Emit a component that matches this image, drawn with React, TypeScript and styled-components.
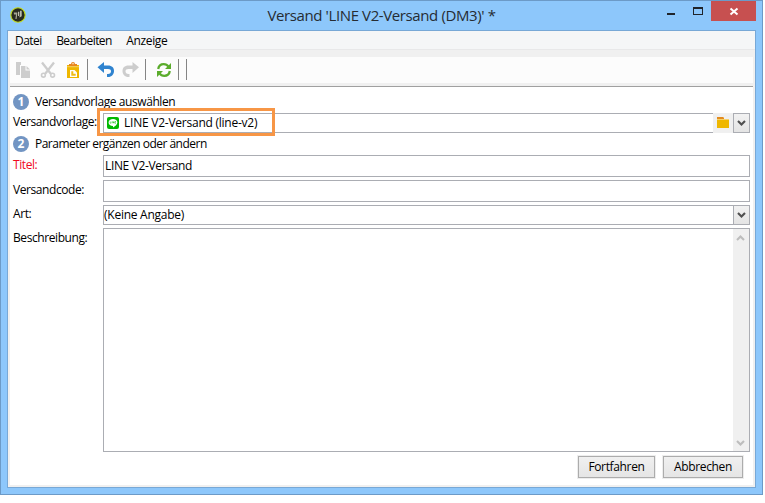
import React from "react";
import styled, { createGlobalStyle } from "styled-components";

const Global = createGlobalStyle`
  * { box-sizing: border-box; }
  body { margin: 0; background: #fff; font-family: "Open Sans", "Noto Sans", sans-serif; font-size: 12px; color: #000; }
`;

const Window = styled.div`
  width: 763px;
  height: 495px;
  display: flex;
  flex-direction: column;
  padding: 0 6px 6px;
  background: #8dc7fb;
  border: 1px solid #6c9ac7;
`;
const TitleBar = styled.header`
  height: 29px;
  flex: none;
  display: flex;
`;
const AppIcon = styled.svg`
  width: 16px;
  height: 16px;
  margin: 6px 0 0 3px;
`;
const Title = styled.h1`
  flex: 1;
  margin: 0;
  padding: 2px 0 0 107px;
  text-align: center;
  font-size: 15px;
  line-height: 24px;
  font-weight: 400;
  letter-spacing: -0.39px;
  color: #262c33;
  white-space: nowrap;
`;
const Controls = styled.div`
  display: flex;
  width: 126px;
`;
const CaptionButton = styled.button<{ $width: number; $close?: boolean }>`
  width: ${(p) => p.$width}px;
  flex: none;
  height: 20px;
  padding: 0;
  border: 0;
  background: ${(p) => (p.$close ? "#c75050" : "transparent")};
  svg { display: block; }
`;
const Client = styled.main`
  flex: 1;
  min-height: 0;
  display: flex;
  flex-direction: column;
  border: 1px solid #78a8d6;
  background: #f0f0f0;
`;
const MenuBar = styled.nav`
  height: 19px;
  flex: none;
  display: flex;
  gap: 14.5px;
  padding-left: 7px;
  background: #f5f6f7;
  border-bottom: 1px solid #e8e8e9;
`;
const MenuItem = styled.span<{ $spacing: number }>`
  line-height: 20px;
  letter-spacing: ${(p) => p.$spacing}px;
`;
const Toolbar = styled.div`
  height: 26px;
  flex: none;
  margin: 7px 2px 3px;
  background: #fcfcfc;
  svg { display: block; }
`;
const Panel = styled.section`
  flex: 1;
  min-height: 0;
  margin: 0 2px 2px;
  padding-left: 3px;
  background: #fff;
  border-top: 1px solid #a0a0a0;
`;
const Step = styled.div<{ $height: number; $top: number }>`
  height: ${(p) => p.$height}px;
  padding-top: ${(p) => p.$top}px;
  display: flex;
  gap: 6px;
`;
const Badge = styled.span`
  width: 16px;
  height: 16px;
  border-radius: 50%;
  background: #7295c3;
  color: #fff;
  text-align: center;
  font-size: 12px;
  line-height: 16px;
  font-weight: 700;
`;
const Text = styled.span<{ $spacing?: number }>`
  line-height: 16px;
  letter-spacing: ${(p) => p.$spacing ?? -0.42}px;
  white-space: nowrap;
`;
const Label = styled(Text)<{ $top: number; $required?: boolean }>`
  padding-top: ${(p) => p.$top}px;
  color: ${(p) => (p.$required ? "#f00a1e" : "#000")};
`;
const Row = styled.div<{ $gap?: number }>`
  display: grid;
  grid-template-columns: 90px 647px;
  align-items: start;
  margin-bottom: ${(p) => p.$gap ?? 0}px;
`;
const Field = styled.div<{ $height: number; $pad?: number; $gap?: number }>`
  height: ${(p) => p.$height}px;
  position: relative;
  display: flex;
  align-items: center;
  gap: ${(p) => p.$gap ?? 0}px;
  padding-left: ${(p) => p.$pad ?? 1}px;
  background: #fff;
  border: 1px solid #abadb3;
`;
const Highlight = styled.div`
  position: absolute;
  left: -7px;
  top: -6px;
  width: 178px;
  height: 28px;
  border: 3px solid #f79646;
`;
const FieldEnd = styled.div`
  margin-left: auto;
  align-self: stretch;
  display: flex;
`;
const FolderButton = styled.div`
  width: 20px;
  margin: -1px 0;
  padding: 4px 0 0 4px;
  background: #f0f0f0;
  svg { display: block; }
`;
const DropButton = styled.div`
  width: 16px;
  border-left: 1px solid #abadb3;
  background: linear-gradient(#f2f2f2, #e4e4e4);
  display: grid;
  place-items: center;
`;
const ScrollBar = styled.div`
  width: 16px;
  padding: 5px 1px 4px 0;
  background: #f0f0f0;
  display: flex;
  flex-direction: column;
  justify-content: space-between;
  align-items: center;
`;
const Actions = styled.div`
  display: flex;
  justify-content: flex-end;
  gap: 8px;
  padding: 4px 10px 0 0;
`;
const PushButton = styled.button<{ $width: number }>`
  width: ${(p) => p.$width}px;
  height: 22px;
  padding: 0;
  border: 1px solid #acacac;
  outline: 1px solid #ededed;
  background: linear-gradient(#f0f0f0, #e5e5e5);
  font: inherit;
  line-height: 20px;
  color: #000;
  letter-spacing: -0.35px;
`;

const Chevron = ({ color = "#505050", up = false }: { color?: string; up?: boolean }) => (
  <svg width="9" height="8" viewBox="0 0 9 8">
    <path d={up ? "M1 6 4.5 2.4 8 6" : "M1 2 4.5 5.6 8 2"} fill="none" stroke={color} strokeWidth="2.1" />
  </svg>
);

/* All toolbar glyphs share one strip so the separators line up with them. */
const ToolbarIcons = () => (
  <svg width="190" height="26" viewBox="10 57 190 26">
    <g fill="#cdcdcd">
      <path d="M16 62h5v3h-1v10h-4z" />
      <path d="M21 66h4.500v4.500H30V78h-9z" />
      <path d="M26.500 66 30 69.500h-3.500z" />
    </g>
    <g fill="none" stroke="#cdcdcd" strokeWidth="1.6">
      <path d="M42 62.500 51 74M54 62.500 45 74" strokeWidth="2.3" />
      <circle cx="43.400" cy="75.200" r="1.900" />
      <circle cx="52.600" cy="75.200" r="1.900" />
    </g>
    <path d="M67 65h12v13H67z" fill="#efb700" />
    <path d="M69 66v-2h2a2 2 0 0 1 4 0h2v2z" fill="#e8851c" />
    <path d="M72.300 63.200h1.400v1h-1.400z" fill="#fff" />
    <path d="M67 66.200h12v1H67z" fill="#f5cf65" />
    <path d="M70 70h4.500l2.500 2.500V77h-7z" fill="#fff" />
    <path d="M71.300 71.300h2v2.400h2.400v2h-4.400z" fill="#f0bd18" />
    <path d="M97.500 67.300 104 62v3.600h4c4 0 6 2.300 6 5.400 0 3.300-2.300 6-6 6h-1v-3h1c2 0 3-1.200 3-2.800 0-1.500-1-2.200-3-2.200h-4V73z" fill="#2f83cf" />
    <path d="M139 67.300 132.500 62v3.600h-4c-4 0-6 2.300-6 5.400 0 3.300 2.300 6 6 6h1v-3h-1c-2 0-3-1.200-3-2.800 0-1.500 1-2.200 3-2.200h4V73z" fill="#cdcdcd" />
    <g fill="none" stroke="#5bac2c" strokeWidth="2.3">
      <path d="M158.200 69c.5-3 2.500-4.800 5.500-4.800 2.200 0 3.700.8 4.800 2.400" />
      <path d="M169.800 71c-.5 3-2.500 4.800-5.500 4.800-2.200 0-3.700-.8-4.800-2.400" />
    </g>
    <path d="M171 63v6h-6zM157 77v-6h6z" fill="#5bac2c" />
    <path d="M87.500 59v21M145.500 59v21M178.500 59v21M186.500 59v21" stroke="#858585" />
  </svg>
);

export default function App() {
  return (
    <>
      <Global />
      <Window>
        <TitleBar>
          <AppIcon viewBox="0 0 16 16">
            <circle cx="8" cy="8" r="7.2" fill="#292b20" stroke="#c5dc18" strokeWidth="1.1" />
            <path d="M3.800 5.500h3.500v1.300L6.600 12H5.400l.6-4.500H4z" fill="#a8a894" />
            <path d="M8 4.800h1.300V9H8zM10 3.800h1.700v5.400L9.500 10.500V9.200l.5-.4z" fill="#bdbdae" />
          </AppIcon>
          <Title>Versand 'LINE V2-Versand (DM3)' *</Title>
          <Controls>
            <CaptionButton $width={50} aria-label="Minimieren">
              <svg width="50" height="20"><path d="M37 12h8v2h-8z" fill="#20242a" /></svg>
            </CaptionButton>
            <CaptionButton $width={31} aria-label="Maximieren">
              <svg width="31" height="20"><path d="M13 6h10v8H13zM14 8v5h8V8z" fillRule="evenodd" fill="#20242a" /></svg>
            </CaptionButton>
            <CaptionButton $width={45} $close aria-label="Schließen">
              <svg width="45" height="20"><path d="M19.500 7.500l7 6M26.500 7.500l-7 6" stroke="#fff" strokeWidth="2" /></svg>
            </CaptionButton>
          </Controls>
        </TitleBar>
        <Client>
          <MenuBar>
            <MenuItem $spacing={-0.55}>Datei</MenuItem>
            <MenuItem $spacing={-0.6}>Bearbeiten</MenuItem>
            <MenuItem $spacing={-0.35}>Anzeige</MenuItem>
          </MenuBar>
          <Toolbar><ToolbarIcons /></Toolbar>
          <Panel>
            <Step $height={26} $top={7}>
              <Badge>1</Badge>
              <Text>Versandvorlage auswählen</Text>
            </Step>
            <Row>
              <Label $top={1}>Versandvorlage:</Label>
              <Field $height={20} $pad={3} $gap={5}>
                <svg width="12" height="12" viewBox="0 0 12 12">
                  <rect width="12" height="12" rx="2" fill="#00b900" />
                  <path d="M6 2c2.500 0 4.400 1.500 4.400 3.500C10.400 7.800 7.700 9.400 6 10.400V9C3.500 9 1.600 7.500 1.600 5.500S3.500 2 6 2z" fill="#fff" />
                  <path d="M3.200 4.500v1.700h1M5 4.500v1.700M6 6.200V4.500l1 1.700V4.500M9 4.500H8v1.700h1" fill="none" stroke="#00b900" strokeWidth=".55" />
                </svg>
                <Text $spacing={-0.24}>LINE V2-Versand (line-v2)</Text>
                <FieldEnd>
                  <FolderButton>
                    <svg width="12" height="11" viewBox="0 0 12 11">
                      <path d="M0 0h6l1 2h5v9H0z" fill="#efb700" />
                      <path d="M0 0h6l1 1v1H0z" fill="#e38b1e" />
                      <path d="M0 2h12v1H0z" fill="#f6d16a" />
                    </svg>
                  </FolderButton>
                  <DropButton><Chevron /></DropButton>
                </FieldEnd>
                <Highlight />
              </Field>
            </Row>
            <Step $height={22} $top={3}>
              <Badge>2</Badge>
              <Text $spacing={-0.51}>Parameter ergänzen oder ändern</Text>
            </Step>
            <Row $gap={3}>
              <Label $top={2} $required>Titel:</Label>
              <Field $height={22}><Text $spacing={-0.35}>LINE V2-Versand</Text></Field>
            </Row>
            <Row $gap={3}>
              <Label $top={2}>Versandcode:</Label>
              <Field $height={22} />
            </Row>
            <Row $gap={3}>
              <Label $top={1}>Art:</Label>
              <Field $height={20} $pad={0}>
                <Text $spacing={-0.25}>(Keine Angabe)</Text>
                <FieldEnd><DropButton><Chevron /></DropButton></FieldEnd>
              </Field>
            </Row>
            <Row>
              <Label $top={2}>Beschreibung:</Label>
              <Field $height={224}>
                <FieldEnd>
                  <ScrollBar>
                    <Chevron up color="#bdbdbd" />
                    <Chevron color="#bdbdbd" />
                  </ScrollBar>
                </FieldEnd>
              </Field>
            </Row>
            <Actions>
              <PushButton $width={77}>Fortfahren</PushButton>
              <PushButton $width={80}>Abbrechen</PushButton>
            </Actions>
          </Panel>
        </Client>
      </Window>
    </>
  );
}
